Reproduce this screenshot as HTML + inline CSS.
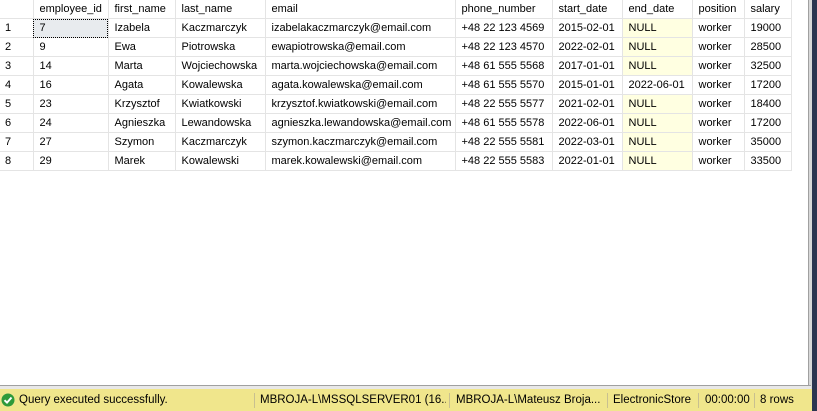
<!DOCTYPE html>
<html><head><style>
body{margin:0;width:817px;height:411px;overflow:hidden;background:#fff;font-family:"Liberation Sans",sans-serif;font-size:11px;color:#000;position:relative}
.grid{position:absolute;left:0;top:0;border-collapse:collapse;table-layout:fixed;width:791px}
.grid td{height:18px;padding:0 0 0 6px;border-right:1px solid #e4e4e4;border-bottom:1px solid #e4e4e4;white-space:nowrap;overflow:hidden;line-height:18px}
.grid td.n{padding-left:5px}
.grid td.nul{background:#ffffe1}
.sel{outline:1px dotted #000;outline-offset:-1px;background:#e8ebee}
#rb{position:absolute;left:808px;top:0;width:3px;height:389px;background:#d8d8d8;border-left:1px solid #a0a0a0}
#nav{position:absolute;left:812px;top:0;width:5px;height:411px;background:#2b3550}
#bb{position:absolute;left:0;top:385px;width:811px;height:4px;background:#e8e8e8;border-top:1px solid #a0a0a0}
#sb{position:absolute;left:0;top:389px;width:812px;height:22px;background:#f0e68c;font-size:11.5px;line-height:22px}
#sb span{position:absolute;top:0;white-space:nowrap;overflow:hidden}
.sep{position:absolute;top:4px;width:1px;height:15px;background:#c8c090}
</style></head><body>
<table class="grid">
<colgroup><col style="width:33px"><col style="width:75px"><col style="width:67px"><col style="width:90px"><col style="width:190px"><col style="width:97px"><col style="width:70px"><col style="width:70px"><col style="width:52px"><col style="width:47px"></colgroup>
<tr><td></td><td>employee_id</td><td>first_name</td><td>last_name</td><td>email</td><td>phone_number</td><td>start_date</td><td>end_date</td><td>position</td><td>salary</td></tr>
<tr><td class="n">1</td><td class="sel">7</td><td>Izabela</td><td>Kaczmarczyk</td><td>izabelakaczmarczyk@email.com</td><td>+48 22 123 4569</td><td>2015-02-01</td><td class="nul">NULL</td><td>worker</td><td>19000</td></tr>
<tr><td class="n">2</td><td>9</td><td>Ewa</td><td>Piotrowska</td><td>ewapiotrowska@email.com</td><td>+48 22 123 4570</td><td>2022-02-01</td><td class="nul">NULL</td><td>worker</td><td>28500</td></tr>
<tr><td class="n">3</td><td>14</td><td>Marta</td><td>Wojciechowska</td><td>marta.wojciechowska@email.com</td><td>+48 61 555 5568</td><td>2017-01-01</td><td class="nul">NULL</td><td>worker</td><td>32500</td></tr>
<tr><td class="n">4</td><td>16</td><td>Agata</td><td>Kowalewska</td><td>agata.kowalewska@email.com</td><td>+48 61 555 5570</td><td>2015-01-01</td><td>2022-06-01</td><td>worker</td><td>17200</td></tr>
<tr><td class="n">5</td><td>23</td><td>Krzysztof</td><td>Kwiatkowski</td><td>krzysztof.kwiatkowski@email.com</td><td>+48 22 555 5577</td><td>2021-02-01</td><td class="nul">NULL</td><td>worker</td><td>18400</td></tr>
<tr><td class="n">6</td><td>24</td><td>Agnieszka</td><td>Lewandowska</td><td>agnieszka.lewandowska@email.com</td><td>+48 61 555 5578</td><td>2022-06-01</td><td class="nul">NULL</td><td>worker</td><td>17200</td></tr>
<tr><td class="n">7</td><td>27</td><td>Szymon</td><td>Kaczmarczyk</td><td>szymon.kaczmarczyk@email.com</td><td>+48 22 555 5581</td><td>2022-03-01</td><td class="nul">NULL</td><td>worker</td><td>35000</td></tr>
<tr><td class="n">8</td><td>29</td><td>Marek</td><td>Kowalewski</td><td>marek.kowalewski@email.com</td><td>+48 22 555 5583</td><td>2022-01-01</td><td class="nul">NULL</td><td>worker</td><td>33500</td></tr>
</table>
<div id="rb"></div><div id="bb"></div><div id="nav"></div>
<div id="sb">
<svg style="position:absolute;left:1px;top:4px" width="14" height="14" viewBox="0 0 14 14"><circle cx="7" cy="7" r="6.5" fill="#2e9a3a"/><path d="M3.5 7.2L6 9.6L10.5 4.5" stroke="#fff" stroke-width="2" fill="none"/></svg>
<span style="left:19px">Query executed successfully.</span>
<div class="sep" style="left:254px"></div><span style="left:260px;width:186px">MBROJA-L\MSSQLSERVER01 (16....</span>
<div class="sep" style="left:449px"></div><span style="left:456px;width:148px">MBROJA-L\Mateusz Broja...</span>
<div class="sep" style="left:607px"></div><span style="left:613px;width:84px">ElectronicStore</span>
<div class="sep" style="left:698px"></div><span style="left:705px">00:00:00</span>
<div class="sep" style="left:754px"></div><span style="left:760px">8 rows</span>
</div>
</body></html>
